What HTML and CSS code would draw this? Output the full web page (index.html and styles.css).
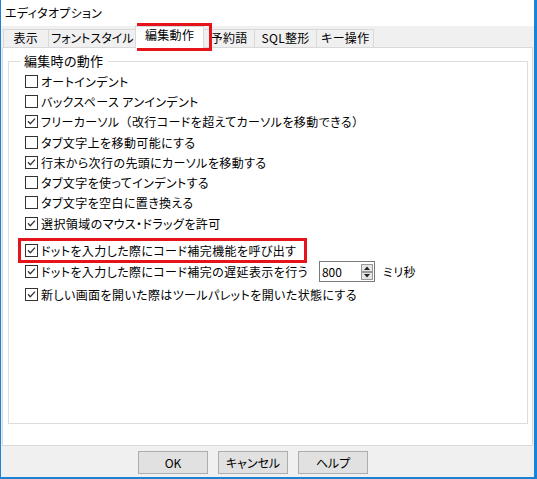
FILE: index.html
```html
<!DOCTYPE html>
<html lang="ja">
<head>
<meta charset="utf-8">
<title>エディタオプション</title>
<link rel="stylesheet" href="styles.css">
</head>
<body>
<div class="window">
  <div class="titlebar">エディタオプション</div>
  <div class="tabs">
    <div class="tab tab-wide">表示</div>
    <div class="tab tab-narrow">フォントスタイル</div>
    <div class="tab tab-active">編集動作</div>
    <div class="tab">予約語</div>
    <div class="tab">SQL整形</div>
    <div class="tab tab-key">キー操作</div>
  </div>
  <div class="panel">
    <fieldset class="group">
      <legend class="group-title">編集時の動作</legend>
      <div class="rows">
        <div class="row"><span class="cb"></span><span>オートインデント</span></div>
        <div class="row"><span class="cb"></span><span>バックスペース アンインデント</span></div>
        <div class="row"><span class="cb cb-on"><svg viewBox="0 0 13 13" width="13" height="13"><path d="M3 6.2 L5.3 8.8 L10 3.6" fill="none" stroke="#333" stroke-width="1.3"/></svg></span><span>フリーカーソル<span class="fw">（</span>改行コードを超えてカーソルを移動できる<span class="fw">）</span></span></div>
        <div class="row"><span class="cb"></span><span>タブ文字上を移動可能にする</span></div>
        <div class="row"><span class="cb cb-on"><svg viewBox="0 0 13 13" width="13" height="13"><path d="M3 6.2 L5.3 8.8 L10 3.6" fill="none" stroke="#333" stroke-width="1.3"/></svg></span><span>行末から次行の先頭にカーソルを移動する</span></div>
        <div class="row"><span class="cb"></span><span>タブ文字を使ってインデントする</span></div>
        <div class="row"><span class="cb"></span><span>タブ文字を空白に置き換える</span></div>
        <div class="row"><span class="cb cb-on"><svg viewBox="0 0 13 13" width="13" height="13"><path d="M3 6.2 L5.3 8.8 L10 3.6" fill="none" stroke="#333" stroke-width="1.3"/></svg></span><span>選択領域のマウス・ドラッグを許可</span></div>
        <div class="row row-dot"><span class="cb cb-on"><svg viewBox="0 0 13 13" width="13" height="13"><path d="M3 6.2 L5.3 8.8 L10 3.6" fill="none" stroke="#333" stroke-width="1.3"/></svg></span><span>ドットを入力した際にコード補完機能を呼び出す</span></div>
        <div class="row row-tall"><span class="cb cb-on"><svg viewBox="0 0 13 13" width="13" height="13"><path d="M3 6.2 L5.3 8.8 L10 3.6" fill="none" stroke="#333" stroke-width="1.3"/></svg></span><span>ドットを入力した際にコード補完の遅延表示を行う</span>
          <span class="spin"><span class="spin-value">800</span><span class="spin-btns"><svg viewBox="0 0 12 16" width="12" height="16"><rect x="0.5" y="0.5" width="11" height="7" fill="#e6e6e6" stroke="#9a9a9a"/><rect x="0.5" y="8.5" width="11" height="7" fill="#e6e6e6" stroke="#9a9a9a"/><path d="M3 6 L6 2.5 L9 6 Z" fill="#222"/><path d="M3 10 L6 13.5 L9 10 Z" fill="#222"/></svg></span></span>
          <span class="unit">ミリ秒</span></div>
        <div class="row row-tall"><span class="cb cb-on"><svg viewBox="0 0 13 13" width="13" height="13"><path d="M3 6.2 L5.3 8.8 L10 3.6" fill="none" stroke="#333" stroke-width="1.3"/></svg></span><span>新しい画面を開いた際はツールパレットを開いた状態にする</span></div>
      </div>
    </fieldset>
  </div>
  <div class="buttons">
    <div class="btn">OK</div>
    <div class="btn">キャンセル</div>
    <div class="btn">ヘルプ</div>
  </div>
  <div class="mark mark-tab"></div>
  <div class="mark mark-row"></div>
</div>
</body>
</html>
```

FILE: styles.css
```css
* { box-sizing: border-box; }
html, body { margin: 0; padding: 0; background: #fff; }
body {
  font-family: "Noto Sans CJK JP", "Noto Sans", sans-serif;
  font-size: 12px;
  color: #000;
  font-feature-settings: "palt";
}
.window {
  position: relative;
  width: 537px;
  height: 479px;
  border-left: 1px solid #1883d7;
  border-right: 3px solid #1883d7;
  border-bottom: 2px solid #1883d7;
  background: #f0f0f0;
  display: flex;
  flex-direction: column;
}
.titlebar {
  height: 26px;
  line-height: 26px;
  padding-left: 4px;
  background: #fff;
  letter-spacing: 0.3px;
}
.tabs {
  height: 21px;
  display: flex;
  align-items: flex-end;
  padding-left: 2px;
  letter-spacing: 0.3px;
}
.tab {
  height: 18px;
  line-height: 16px;
  padding: 0 6.5px;
  border: 1px solid #d9d9d9;
  border-bottom: none;
  margin-right: -1px;
  background: #f0f0f0;
  white-space: nowrap;
}
.tab-wide { padding: 0 9.5px; }
.tab-narrow { padding: 0 2.5px; letter-spacing: 0; }
.tab-key { padding: 0 4px; }
.tab-active {
  position: relative;
  z-index: 1;
  height: 22px;
  line-height: 15px;
  padding: 0 9px;
  margin: 0 -1px -1px -1px;
  background: #fff;
}
.panel {
  height: 399px;
  margin: 0 1px 0 1px;
  background: #fff;
  border: 1px solid #d9d9d9;
}
.group {
  margin: 6px 4px 0 5px;
  padding: 0;
  height: 370px;
  border: 1px solid #dcdcdc;
  min-width: 0;
}
.group-title {
  margin-left: 11px;
  padding: 0 5px 0 4px;
  line-height: 14px;
  font-size: 13px;
  letter-spacing: 0.3px;
}
.rows {
  padding: 3px 0 0 16px;
  display: flex;
  flex-direction: column;
  letter-spacing: 0.4px;
}
.row {
  height: 20.3px;
  display: flex;
  align-items: center;
  gap: 3px;
  white-space: nowrap;
}
.fw { font-feature-settings: normal; }
.row-dot { margin-top: 6.5px; }
.row-tall { height: 23px; }
.cb {
  width: 13px;
  height: 13px;
  flex: none;
  border: 1px solid #333;
  background: #fff;
  position: relative;
}
.cb svg {
  position: absolute;
  left: -1px;
  top: -1px;
}
.spin {
  margin-left: 8px;
  width: 56px;
  height: 21px;
  border: 1px solid #7a7a7a;
  display: flex;
  align-items: center;
  justify-content: space-between;
  padding: 0 1px 0 2px;
  background: #fff;
  letter-spacing: 0;
}
.spin-btns { display: flex; }
.unit { margin-left: 5px; }
.buttons {
  flex: 1;
  display: flex;
  gap: 10px;
  padding: 5px 0 0 137px;
}
.btn {
  width: 70px;
  height: 23px;
  border: 1px solid #adadad;
  background: #e1e1e1;
  display: flex;
  align-items: center;
  justify-content: center;
}
.mark {
  position: absolute;
  border: 3px solid #e5131a;
  pointer-events: none;
}
.mark-tab { left: 136px; top: 23px; width: 75px; height: 28px; }
.mark-row { left: 17px; top: 238px; width: 289px; height: 25px; }
```
